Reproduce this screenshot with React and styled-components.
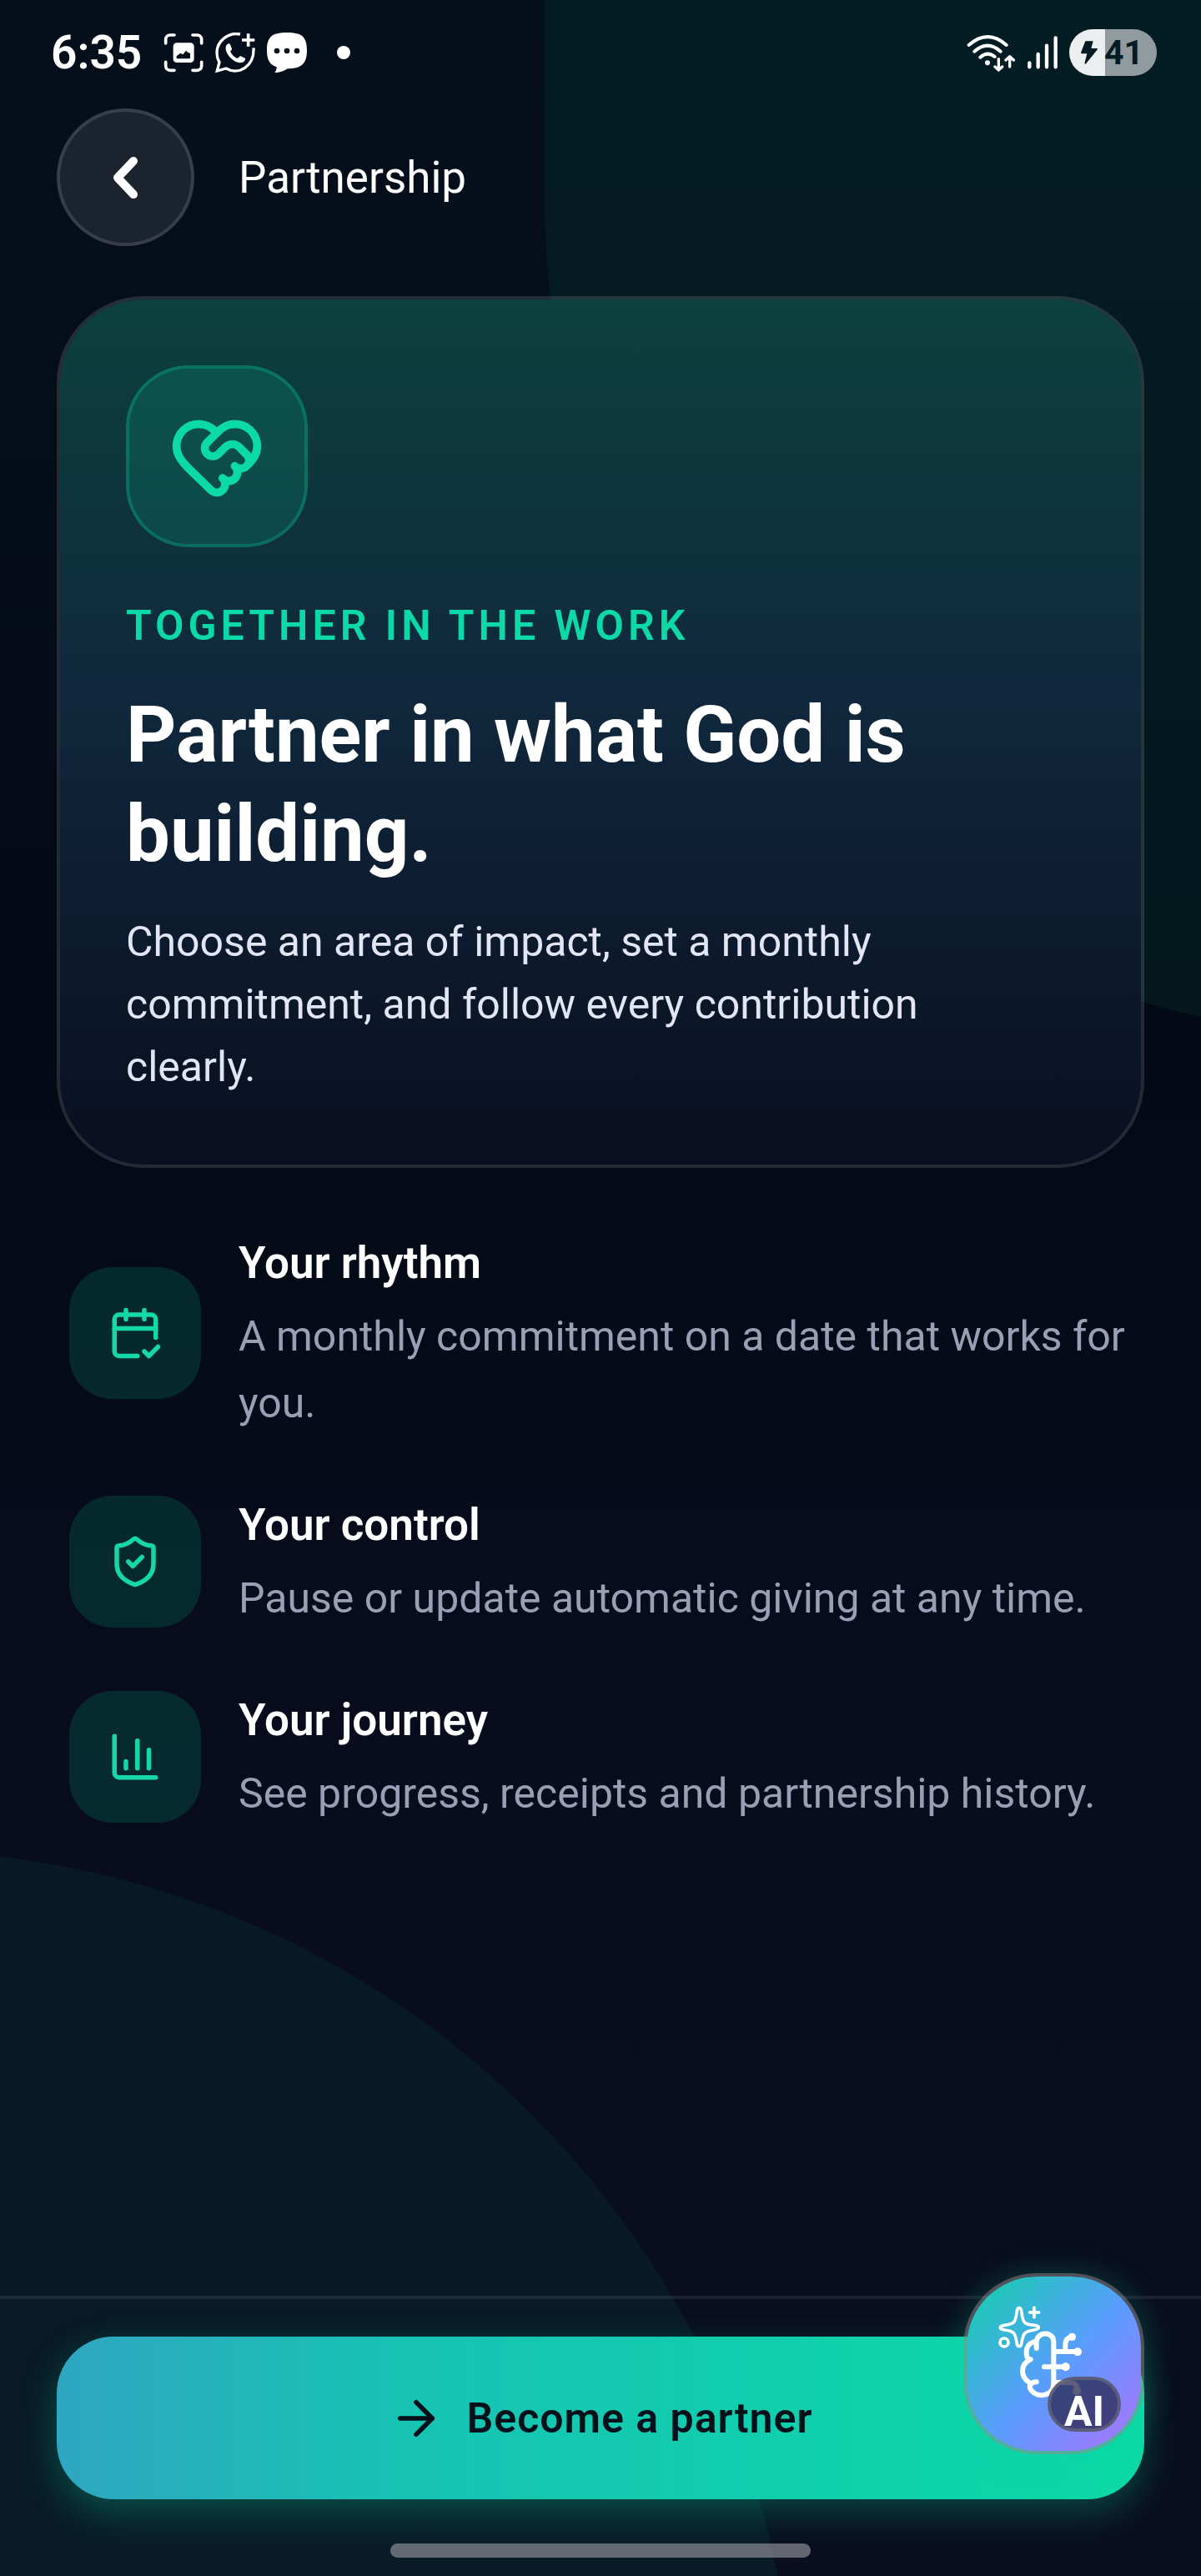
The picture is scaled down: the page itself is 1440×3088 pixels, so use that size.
import React from 'react';
import styled, { createGlobalStyle } from 'styled-components';
import { ArrowRight, CalendarCheck2, ChartColumn, HeartHandshake, ShieldCheck } from 'lucide-react';

const features = [
  {
    icon: CalendarCheck2,
    title: 'Your rhythm',
    text: 'A monthly commitment on a date that works for you.',
  },
  {
    icon: ShieldCheck,
    title: 'Your control',
    text: 'Pause or update automatic giving at any time.',
  },
  {
    icon: ChartColumn,
    title: 'Your journey',
    text: 'See progress, receipts and partnership history.',
  },
];

const ScreenshotIcon = () => (
  <svg width="48" height="48" viewBox="465 86 144 144" fill="none" stroke="#fff" strokeWidth="11" strokeLinecap="round">
    <path d="M473 125v-14a16 16 0 0 1 16-16h15M570 95h16a16 16 0 0 1 16 16v14M602 192v14a16 16 0 0 1-16 16h-16M504 222h-15a16 16 0 0 1-16-16v-14" />
    <rect x="500" y="123" width="75" height="71" rx="13" fill="#fff" stroke="none" />
    <path d="M512 179v-8l14-11 9 5 11-14 7 7 8 2v17q0 3-4 3h-41q-4 0-4-1z" fill="#06101b" stroke="none" />
  </svg>
);

const WhatsappIcon = () => (
  <svg width="48" height="48" viewBox="651 86 144 144" fill="none" stroke="#fff">
    <path d="M741 92C700 84 657 115 657 159q0 18 9 34l-8 31 32-9c45 26 103-7 99-74" strokeWidth="10" />
    <path d="M770 90v46M747 113h46" strokeWidth="11" />
    <path d="M690 134c7-12 13-9 15-5l6 15c1 5-6 8-5 12 5 10 13 18 24 23 5 0 8-10 13-8l15 7c5 4-3 14-12 16-28 5-64-35-56-60z" fill="#fff" stroke="none" />
  </svg>
);

const ChatIcon = () => (
  <svg width="48" height="48" viewBox="837 86 144 144">
    <path d="M909 86c56 0 72 17 72 64 0 46-17 66-69 66-12 8-30 14-48 15 6-7 9-14 8-21-26-8-35-27-35-60 0-47 17-64 72-64z" fill="#fff" />
    <g fill="#06101b">
      <circle cx="873" cy="152" r="10" />
      <circle cx="909" cy="152" r="10" />
      <circle cx="945" cy="152" r="10" />
    </g>
  </svg>
);

const WifiIcon = () => (
  <svg width="59" height="45" viewBox="88 88 177 135" fill="none" stroke="#fff" strokeWidth="12" strokeLinecap="round" strokeLinejoin="round">
    <path d="M96 127q68-59 135 0M116 150q47-42 94 0M137 171q26-23 52-2" />
    <circle cx="163" cy="191" r="9" fill="#fff" stroke="none" />
    <path d="M203 177v40M190 205l13 12 13-12M243 205v-37M229 181l14-13 14 13" strokeWidth="10" />
  </svg>
);

const SignalIcon = () => (
  <svg width="36" height="40" viewBox="302 96 108 120" stroke="#fff" strokeWidth="13" strokeLinecap="round">
    <path d="M309 193v15M340 162v46M371 131v77M403 103v105" />
  </svg>
);

const BoltIcon = () => (
  <svg width="20" height="28" viewBox="499 112 60 84" fill="#051b23">
    <path d="M515 113h28l-7 26h21q3 2 0 6l-41 50-4-1 9-36h-20q-3-2-1-6z" />
  </svg>
);

const BrainIcon = () => (
  <svg width="209" height="209" viewBox="117 87 627 627" fill="none" stroke="#fff" strokeLinecap="round" strokeLinejoin="round">
    <path d="M306 200c7 0 8 7 9 17 4 37 10 42 45 45 21 2 21 14 0 17-35 5-40 13-45 45-2 19-16 19-18 0-5-34-10-41-44-45-20-3-20-14 0-17 35-4 40-10 44-45 1-10 2-17 9-17z" strokeWidth="11" />
    <path d="M360 199v34M344 216h33" strokeWidth="11" />
    <circle cx="252" cy="324" r="15" strokeWidth="11" />
    <g strokeWidth="18">
      <path d="M430 470v-149c0-38-61-38-62 2v22M366 320c-32 6-39 32-31 58M347 385c-37 17-38 60-6 82M368 466c-26 2-28 20-17 32 23 27 79 20 79-28M430 357h80M396 412h75M472 353v-22q0-22 21-27M431 468h59q24 1 24 25" />
    </g>
    <g fill="#fff" stroke="none">
      <circle cx="496" cy="304" r="14" />
      <circle cx="516" cy="358" r="15" />
      <circle cx="473" cy="412" r="15" />
      <circle cx="514" cy="499" r="15" />
    </g>
  </svg>
);

const App = () => (
  <Screen>
    <GlobalStyle />
    <StatusBar>
      <StatusGroup>
        <Clock>6:35</Clock>
        <ScreenshotIcon />
        <WhatsappIcon />
        <ChatIcon />
        <Dot />
      </StatusGroup>
      <StatusGroup>
        <WifiIcon />
        <SignalIcon />
        <Battery>
          <BoltIcon />
          41
        </Battery>
      </StatusGroup>
    </StatusBar>
    <Header>
      <BackButton aria-label="Back">
        <svg width="64" height="64" viewBox="0 0 64 64" fill="none" stroke="#fff" strokeWidth="10" strokeLinecap="round" strokeLinejoin="round">
          <path d="M41 12 22 32l19 20" />
        </svg>
      </BackButton>
      <PageTitle>Partnership</PageTitle>
    </Header>
    <Card>
      <CardIcon>
        <HeartHandshake size={116} />
      </CardIcon>
      <Eyebrow>TOGETHER IN THE WORK</Eyebrow>
      <Heading>Partner in what God is building.</Heading>
      <Lead>Choose an area of impact, set a monthly commitment, and follow every contribution clearly.</Lead>
    </Card>
    <FeatureList>
      {features.map(({ icon: Icon, title, text }) => (
        <Feature key={title}>
          <FeatureIcon>
            <Icon size={66} />
          </FeatureIcon>
          <div>
            <FeatureTitle>{title}</FeatureTitle>
            <FeatureText>{text}</FeatureText>
          </div>
        </Feature>
      ))}
    </FeatureList>
    <Footer>
      <PartnerButton>
        <ArrowRight size={66} />
        Become a partner
      </PartnerButton>
      <HomeHandle />
      <AiButton aria-label="AI assistant">
        <BrainIcon />
        <AiBadge>AI</AiBadge>
      </AiButton>
    </Footer>
  </Screen>
);

const GlobalStyle = createGlobalStyle`
  * {
    box-sizing: border-box;
  }
  body {
    margin: 0;
    background: #090d1e;
    font-family: Roboto, "Liberation Sans", sans-serif;
  }
  h1, h2, h3, p, ul {
    margin: 0;
    padding: 0;
  }
  button {
    font-family: inherit;
    cursor: pointer;
  }
  svg {
    display: block;
    flex-shrink: 0;
  }
`;

const Screen = styled.main`
  position: relative;
  z-index: 0;
  overflow: hidden;
  min-height: 100vh;
  display: flex;
  flex-direction: column;
  color: #fff;
  background: linear-gradient(180deg, #050f1b 0%, #040a15 40%, #070b1b 60%, #090d1e 85%, #0a0e1f 100%);

  &::before,
  &::after {
    content: '';
    position: absolute;
    z-index: -1;
    background: rgba(0, 214, 150, 0.065);
  }
  &::before {
    width: 2000px;
    height: 1242px;
    top: 0;
    right: -1213px;
    border-radius: 0 0 1000px 1000px;
  }
  &::after {
    width: 2158px;
    height: 2158px;
    left: -1205px;
    bottom: -1288px;
    border-radius: 50%;
  }
`;
const StatusBar = styled.div`
  height: 126px;
  padding: 0 53px 0 61px;
  margin-bottom: 4px;
  display: flex;
  align-items: center;
  justify-content: space-between;
`;
const StatusGroup = styled.div`
  display: flex;
  align-items: center;
  gap: 14px;
`;
const Clock = styled.span`
  margin-right: 12px;
  font-size: 55px;
  font-weight: 600;
`;
const Dot = styled.span`
  width: 16px;
  height: 16px;
  margin-left: 22px;
  border-radius: 50%;
  background: #fff;
`;
const Battery = styled.span`
  height: 56px;
  width: 105px;
  padding-left: 14px;
  display: flex;
  align-items: center;
  gap: 8px;
  border-radius: 28px;
  background: linear-gradient(90deg, #eceeef 41%, #909a9f 41%);
  color: #051b23;
  font-size: 41px;
  font-weight: 700;
`;
const Header = styled.header`
  padding: 0 68px;
  display: flex;
  align-items: center;
  gap: 53px;
`;
const BackButton = styled.button`
  width: 165px;
  height: 165px;
  padding: 0;
  display: flex;
  align-items: center;
  justify-content: center;
  border: 4px solid rgba(255, 255, 255, 0.12);
  border-radius: 50%;
  background: rgba(255, 255, 255, 0.09);
`;
const PageTitle = styled.h1`
  font-size: 53px;
  font-weight: 400;
`;
const Card = styled.section`
  margin: 60px 68px 0;
  padding: 79px;
  border: 4px solid rgba(255, 255, 255, 0.13);
  border-radius: 105px;
  background: linear-gradient(180deg, #0c413d 0%, #10283d 45%, #0a0e20 100%) padding-box;
`;
const CardIcon = styled.div`
  width: 218px;
  height: 218px;
  display: flex;
  align-items: center;
  justify-content: center;
  border: 4px solid rgba(6, 214, 160, 0.36);
  border-radius: 75px;
  background: rgba(6, 214, 160, 0.14);
  background-clip: padding-box;
  color: #0bd9a7;
`;
const Eyebrow = styled.p`
  margin-top: 58px;
  font-size: 50px;
  line-height: 72px;
  font-weight: 600;
  letter-spacing: 5px;
  color: #0bd9a7;
`;
const Heading = styled.h2`
  margin-top: 36px;
  font-size: 94px;
  line-height: 119px;
  font-weight: 700;
`;
const Lead = styled.p`
  max-width: 1080px;
  margin-top: 32px;
  font-size: 50px;
  line-height: 75px;
  color: #e2e5f3;
`;
const FeatureList = styled.ul`
  list-style: none;
  margin: 74px 83px 66px;
  display: flex;
  flex-direction: column;
  gap: 66px;
`;
const Feature = styled.li`
  display: flex;
  align-items: center;
  gap: 45px;
`;
const FeatureIcon = styled.div`
  width: 158px;
  height: 158px;
  flex-shrink: 0;
  display: flex;
  align-items: center;
  justify-content: center;
  border-radius: 52px;
  background: rgba(6, 214, 160, 0.15);
  color: #14d8a8;
`;
const FeatureTitle = styled.h3`
  margin-bottom: 8px;
  font-size: 53px;
  line-height: 80px;
  font-weight: 600;
`;
const FeatureText = styled.p`
  font-size: 50px;
  line-height: 80px;
  color: #9a9fb5;
`;
const Footer = styled.footer`
  position: relative;
  margin-top: auto;
  padding: 45px 68px 22px;
  display: flex;
  flex-direction: column;
  align-items: center;
  gap: 53px;
  border-top: 4px solid rgba(255, 255, 255, 0.08);
`;
const PartnerButton = styled.button`
  width: 100%;
  height: 195px;
  display: flex;
  align-items: center;
  justify-content: center;
  gap: 28px;
  border: none;
  border-radius: 68px;
  background: linear-gradient(90deg, #2fa6c1 0%, #17c3b3 32%, #0bd9a7 100%);
  box-shadow: 0 16px 44px rgba(6, 214, 160, 0.28);
  color: #04101a;
  font-size: 50px;
  font-weight: 600;
  letter-spacing: 1px;
`;
const HomeHandle = styled.div`
  width: 504px;
  height: 17px;
  border-radius: 9px;
  background: rgba(160, 160, 168, 0.6);
`;
const AiButton = styled.button`
  position: absolute;
  right: 68px;
  bottom: 146px;
  width: 217px;
  height: 217px;
  padding: 0;
  border: 4px solid rgba(140, 140, 140, 0.55);
  border-radius: 88px;
  background: linear-gradient(135deg, #10d2a8 0%, #5a9dff 53%, #b070ff 100%) padding-box;
  box-shadow: 0 4px 40px rgba(6, 214, 160, 0.28);
`;
const AiBadge = styled.span`
  position: absolute;
  right: 24px;
  bottom: 23px;
  width: 88px;
  height: 66px;
  padding-top: 9px;
  border: 4px solid rgba(110, 110, 120, 0.6);
  border-radius: 33px;
  background: rgba(40, 40, 80, 0.75);
  color: #fff;
  font-size: 50px;
  line-height: 58px;
  font-weight: 700;
`;

export default App;
